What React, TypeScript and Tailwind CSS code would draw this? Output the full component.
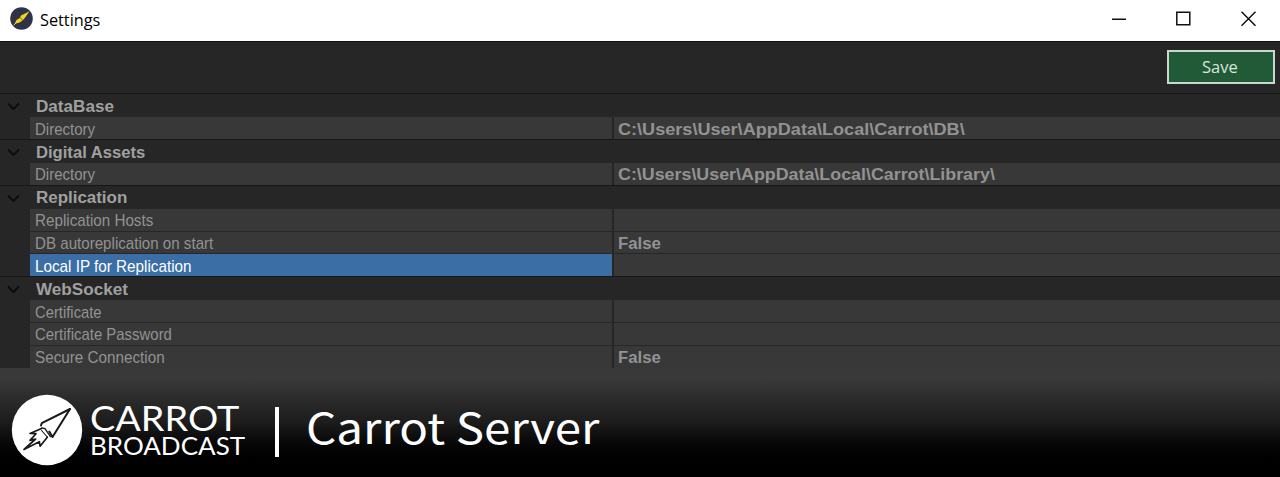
import { useLayoutEffect, useRef, type ReactNode } from "react";

/** One line of text, stretched horizontally to a given advance width. */
function FitText({ width, className = "", children }: { width: number; className?: string; children: ReactNode }) {
  const ref = useRef<HTMLSpanElement>(null);
  useLayoutEffect(() => {
    const el = ref.current;
    if (el) el.style.transform = `scaleX(${width / el.offsetWidth})`;
  }, [width]);
  return (
    <span className="block shrink-0" style={{ width }}>
      <span ref={ref} className={`inline-block origin-left whitespace-nowrap align-top ${className}`}>
        {children}
      </span>
    </span>
  );
}

type Item = { label: string; labelWidth: number; value?: string; valueWidth?: number; selected?: boolean };
type Group = { title: string; titleWidth: number; items: Item[] };

const groups: Group[] = [
  {
    title: "DataBase",
    titleWidth: 78,
    items: [{ label: "Directory", labelWidth: 60, value: "C:\\Users\\User\\AppData\\Local\\Carrot\\DB\\", valueWidth: 347 }],
  },
  {
    title: "Digital Assets",
    titleWidth: 109,
    items: [{ label: "Directory", labelWidth: 60, value: "C:\\Users\\User\\AppData\\Local\\Carrot\\Library\\", valueWidth: 377 }],
  },
  {
    title: "Replication",
    titleWidth: 91,
    items: [
      { label: "Replication Hosts", labelWidth: 118 },
      { label: "DB autoreplication on start", labelWidth: 178, value: "False", valueWidth: 43 },
      { label: "Local IP for Replication", labelWidth: 157, selected: true },
    ],
  },
  {
    title: "WebSocket",
    titleWidth: 92,
    items: [
      { label: "Certificate", labelWidth: 67 },
      { label: "Certificate Password", labelWidth: 137 },
      { label: "Secure Connection", labelWidth: 130, value: "False", valueWidth: 43 },
    ],
  },
];

function TitleBar() {
  return (
    <header className="flex h-[41px] shrink-0 items-start bg-white text-black">
      <svg className="ml-[10px] mt-[7px] shrink-0" width="23" height="23" viewBox="0 0 23 23">
        <circle cx="11.5" cy="11.5" r="11.3" fill="#303348" />
        <path d="M19.5 4.2 11 8.6l-1.2 2.3-3.3 2.2-1.8 3.6 4.9-1.3 3.2-2.2 1.6-1.6z" fill="#f3d51d" />
        <path d="M10.3 10.8l2.3 2.1" fill="none" stroke="#303348" strokeWidth=".8" />
        <path d="m3.5 18.3 4.6-4.2" stroke="#f3d51d" strokeWidth="1" />
      </svg>
      <div className="ml-[7px] mt-[8px] font-['Open_Sans','Noto_Sans',sans-serif] text-[16px] leading-6">
        <FitText width={60}>Settings</FitText>
      </div>
      <svg className="ml-auto mr-[23px] mt-[10px]" width="146" height="18" viewBox="0 0 146 18" fill="none" stroke="#111" strokeWidth="1.5">
        <path d="M1 9.25h14" />
        <path d="M65.8 2.2h13v12.6h-13z" />
        <path d="m130.5 1.7 14 14M144.5 1.7l-14 14" strokeWidth="1.5" />
      </svg>
    </header>
  );
}

function PropertyGrid() {
  return (
    <main className="h-[275px] shrink-0 bg-[#262626] pt-[0.4px] font-['Liberation_Sans',sans-serif] text-[16px] leading-[22px] text-[#929292]">
      {groups.map((group) => (
        <section key={group.title}>
          <h2 className="flex h-[22.86px] items-center border-t border-[#171717] bg-[#262626] pt-[3px] font-bold">
            <svg className="ml-[7px] mr-[16px] shrink-0" width="13" height="9" viewBox="0 0 13 9">
              <path d="m1 1.5 5.5 5.5L12 1.5" fill="none" stroke="#0d0d0d" strokeWidth="2" />
            </svg>
            <FitText width={group.titleWidth} className="text-[#a0a0a0]">{group.title}</FitText>
          </h2>
          {group.items.map((item) => (
            <div key={item.label} className="flex h-[22.86px] bg-[#262626] pl-[30px]">
              <div
                className={`flex w-[582px] shrink-0 items-center border-t border-[#272727] pl-[5px] pt-[3px] text-[17px] ${
                  item.selected ? "bg-[#3a6ea5] text-white" : "bg-[#383838]"
                }`}
              >
                <FitText width={item.labelWidth}>{item.label}</FitText>
              </div>
              <div className="ml-[2px] flex grow items-center border-t border-[#272727] bg-[#383838] pl-[4px] pt-[3px] font-bold">
                {item.value && <FitText width={item.valueWidth ?? 43}>{item.value}</FitText>}
              </div>
            </div>
          ))}
        </section>
      ))}
    </main>
  );
}

function Banner() {
  return (
    <footer className="flex grow items-start bg-linear-to-b from-[#393939] from-10% via-[#1c1c1c] via-50% to-black to-95% text-white">
      <svg className="ml-[11px] mt-[26px] shrink-0" width="72" height="72" viewBox="0 0 72 72">
        <circle cx="36" cy="36" r="35.2" fill="#fff" />
        <g fill="none" stroke="#191919" strokeLinejoin="round" strokeLinecap="round">
          <path d="m30 31.5.8-2.3L59 15" strokeWidth="2" />
          <path d="M59 15 41.5 43l-3.2-5.5" strokeWidth="2" />
          <path d="m31 34 3 .6 5.5 8" strokeWidth="1.4" />
          <path d="m30.5 34.5-11.5 5 6 .2-6 6.7 5.6-1.4L13 55.5l15.3-7.8.8 4.5 7.2-9" strokeWidth="1.7" />
          <path d="m30.5 36.5 5.8 6.5" strokeWidth="1.1" />
        </g>
      </svg>
      <div className="ml-[7px] mt-[32px] font-['Lato',sans-serif]">
        <div className="h-[36px] text-[35.5px] leading-[36px]"><FitText width={149}>CARROT</FitText></div>
        <div className="h-[20px] text-[24.5px] leading-[20px]"><FitText width={155}>BROADCAST</FitText></div>
      </div>
      <div className="ml-[30px] mt-[39px] h-[50px] w-[4px] bg-white" />
      <h1 className="ml-[27px] mt-[28px] font-['Noto_Sans_CJK_SC',sans-serif] text-[42px] leading-[60px]">
        <FitText width={294}>Carrot Server</FitText>
      </h1>
    </footer>
  );
}

export default function App() {
  return (
    <div className="flex h-[477px] w-[1280px] flex-col overflow-hidden bg-[#383838]">
      <TitleBar />
      <div className="flex h-[52px] shrink-0 items-start justify-end border-t border-[#111] bg-[#262626] pr-[5px] pt-[8px]">
        <button className="flex h-[34px] w-[108px] items-center justify-center border-2 border-[#c9d8ce] bg-[#205a36] pb-px pr-[3px] font-['Open_Sans',sans-serif] text-[16px] text-[#dbe5de]">
          <FitText width={36}>Save</FitText>
        </button>
      </div>
      <PropertyGrid />
      <Banner />
    </div>
  );
}
